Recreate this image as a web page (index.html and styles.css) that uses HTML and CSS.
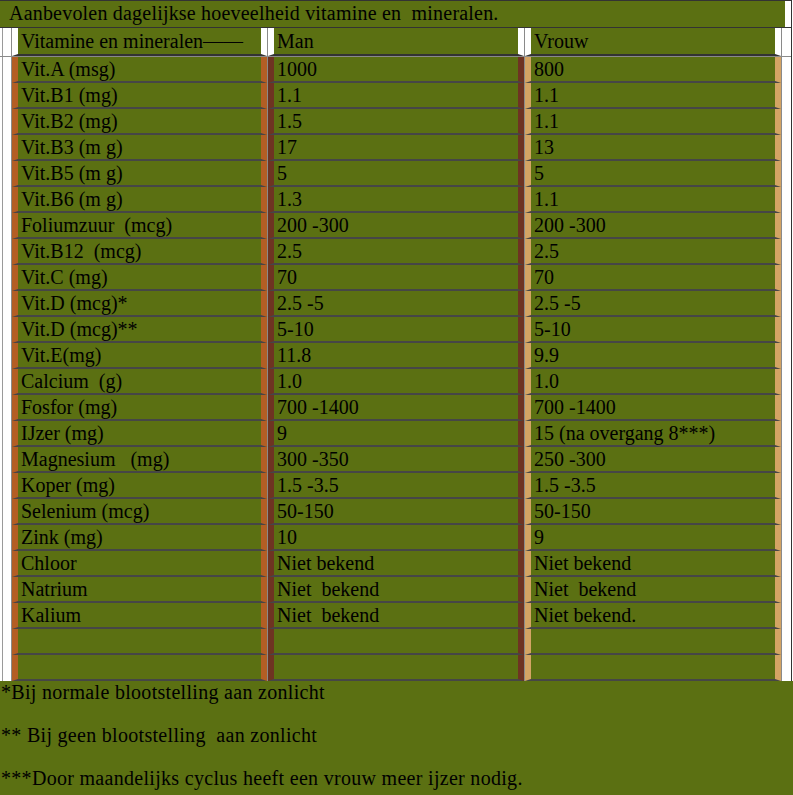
FILE: index.html
```html
<!DOCTYPE html>
<html>
<head>
<meta charset="utf-8">
<link rel="stylesheet" href="styles.css">
</head>
<body>
<div class="sheet">
  <div class="title">
    <div class="title-cell">Aanbevolen dagelijkse hoeveelheid vitamine en  mineralen.</div>
  </div>
  <div class="row head">
    <div class="lead"></div>
    <div class="cell c1">Vitamine en mineralen——</div>
    <div class="cell c2">Man</div>
    <div class="cell c3">Vrouw</div>
    <div class="tail"></div>
  </div>
  <div class="row"><div class="lead"></div><div class="cell c1">Vit.A (msg)</div><div class="cell c2">1000</div><div class="cell c3">800</div><div class="tail"></div></div>
  <div class="row"><div class="lead"></div><div class="cell c1">Vit.B1 (mg)</div><div class="cell c2">1.1</div><div class="cell c3">1.1</div><div class="tail"></div></div>
  <div class="row"><div class="lead"></div><div class="cell c1">Vit.B2 (mg)</div><div class="cell c2">1.5</div><div class="cell c3">1.1</div><div class="tail"></div></div>
  <div class="row"><div class="lead"></div><div class="cell c1">Vit.B3 (m g)</div><div class="cell c2">17</div><div class="cell c3">13</div><div class="tail"></div></div>
  <div class="row"><div class="lead"></div><div class="cell c1">Vit.B5 (m g)</div><div class="cell c2">5</div><div class="cell c3">5</div><div class="tail"></div></div>
  <div class="row"><div class="lead"></div><div class="cell c1">Vit.B6 (m g)</div><div class="cell c2">1.3</div><div class="cell c3">1.1</div><div class="tail"></div></div>
  <div class="row"><div class="lead"></div><div class="cell c1">Foliumzuur  (mcg)</div><div class="cell c2">200 -300</div><div class="cell c3">200 -300</div><div class="tail"></div></div>
  <div class="row"><div class="lead"></div><div class="cell c1">Vit.B12  (mcg)</div><div class="cell c2">2.5</div><div class="cell c3">2.5</div><div class="tail"></div></div>
  <div class="row"><div class="lead"></div><div class="cell c1">Vit.C (mg)</div><div class="cell c2">70</div><div class="cell c3">70</div><div class="tail"></div></div>
  <div class="row"><div class="lead"></div><div class="cell c1">Vit.D (mcg)*</div><div class="cell c2">2.5 -5</div><div class="cell c3">2.5 -5</div><div class="tail"></div></div>
  <div class="row"><div class="lead"></div><div class="cell c1">Vit.D (mcg)**</div><div class="cell c2">5-10</div><div class="cell c3">5-10</div><div class="tail"></div></div>
  <div class="row"><div class="lead"></div><div class="cell c1">Vit.E(mg)</div><div class="cell c2">11.8</div><div class="cell c3">9.9</div><div class="tail"></div></div>
  <div class="row"><div class="lead"></div><div class="cell c1">Calcium  (g)</div><div class="cell c2">1.0</div><div class="cell c3">1.0</div><div class="tail"></div></div>
  <div class="row"><div class="lead"></div><div class="cell c1">Fosfor (mg)</div><div class="cell c2">700 -1400</div><div class="cell c3">700 -1400</div><div class="tail"></div></div>
  <div class="row"><div class="lead"></div><div class="cell c1">IJzer (mg)</div><div class="cell c2">9</div><div class="cell c3">15 (na overgang 8***)</div><div class="tail"></div></div>
  <div class="row"><div class="lead"></div><div class="cell c1">Magnesium   (mg)</div><div class="cell c2">300 -350</div><div class="cell c3">250 -300</div><div class="tail"></div></div>
  <div class="row"><div class="lead"></div><div class="cell c1">Koper (mg)</div><div class="cell c2">1.5 -3.5</div><div class="cell c3">1.5 -3.5</div><div class="tail"></div></div>
  <div class="row"><div class="lead"></div><div class="cell c1">Selenium (mcg)</div><div class="cell c2">50-150</div><div class="cell c3">50-150</div><div class="tail"></div></div>
  <div class="row"><div class="lead"></div><div class="cell c1">Zink (mg)</div><div class="cell c2">10</div><div class="cell c3">9</div><div class="tail"></div></div>
  <div class="row"><div class="lead"></div><div class="cell c1">Chloor</div><div class="cell c2">Niet bekend</div><div class="cell c3">Niet bekend</div><div class="tail"></div></div>
  <div class="row"><div class="lead"></div><div class="cell c1">Natrium</div><div class="cell c2">Niet  bekend</div><div class="cell c3">Niet  bekend</div><div class="tail"></div></div>
  <div class="row"><div class="lead"></div><div class="cell c1">Kalium</div><div class="cell c2">Niet  bekend</div><div class="cell c3">Niet bekend.</div><div class="tail"></div></div>
  <div class="row"><div class="lead"></div><div class="cell c1"></div><div class="cell c2"></div><div class="cell c3"></div><div class="tail"></div></div>
  <div class="row"><div class="lead"></div><div class="cell c1"></div><div class="cell c2"></div><div class="cell c3"></div><div class="tail"></div></div>
</div>
<div class="notes">
  <p>*Bij normale blootstelling aan zonlicht</p>
  <p>** Bij geen blootstelling  aan zonlicht</p>
  <p>***Door maandelijks cyclus heeft een vrouw meer ijzer nodig.</p>
</div>
</body>
</html>
```

FILE: styles.css
```css
html, body {
  margin: 0;
  padding: 0;
  background: #fff;
}
body {
  font-family: "Liberation Serif", "Times New Roman", serif;
  font-size: 20px;
  color: #000;
  width: 793px;
  height: 795px;
  overflow: hidden;
}
.sheet {
  width: 792px;
  box-sizing: border-box;
  border-top: 1px solid #333;
  border-right: 1px solid #333;
}
.title {
  display: flex;
  height: 26px;
  border-bottom: 1px solid #333;
}
.title-cell {
  width: 785px;
  background: #5b7012;
  padding-left: 9px;
  box-sizing: border-box;
  line-height: 25px;
  white-space: pre;
  letter-spacing: 0.2px;
}
.row {
  display: flex;
  gap: 1px;
  background: #8a8a8a;
}
.row.head {
  border-bottom: 1px solid #8a8a8a;
}
.lead {
  width: 11px;
  flex: none;
  background: linear-gradient(to right, #fff 2px, #9a9a9a 2px, #9a9a9a 3px, #fff 3px);
}
.tail {
  width: 9px;
  flex: none;
  background: #fff;
}
.cell {
  box-sizing: border-box;
  height: 26px;
  background: #5b7012;
  border-left: 6px solid;
  border-right: 6px solid;
  border-bottom: 2px solid #464646;
  padding-left: 3px;
  line-height: 24px;
  white-space: pre;
  flex: none;
}
.c1 { width: 255px; border-left-color: #b35e24; border-right-color: #b35e24; }
.c2 { width: 256px; border-left-color: #6e3322; border-right-color: #6e3322; }
.c3 { width: 256px; border-left-color: #d4a464; border-right-color: #d4a464; }
.head .cell {
  height: 28px;
  line-height: 26px;
  border-left-color: #fff;
  border-right-color: #fff;
  border-bottom-color: #333;
}
.notes {
  background: #5b7012;
  height: 116px;
  padding-left: 1px;
  box-sizing: border-box;
}
.notes p {
  margin: 0 0 21px;
  line-height: 22px;
  white-space: pre;
  letter-spacing: 0.3px;
}
```
